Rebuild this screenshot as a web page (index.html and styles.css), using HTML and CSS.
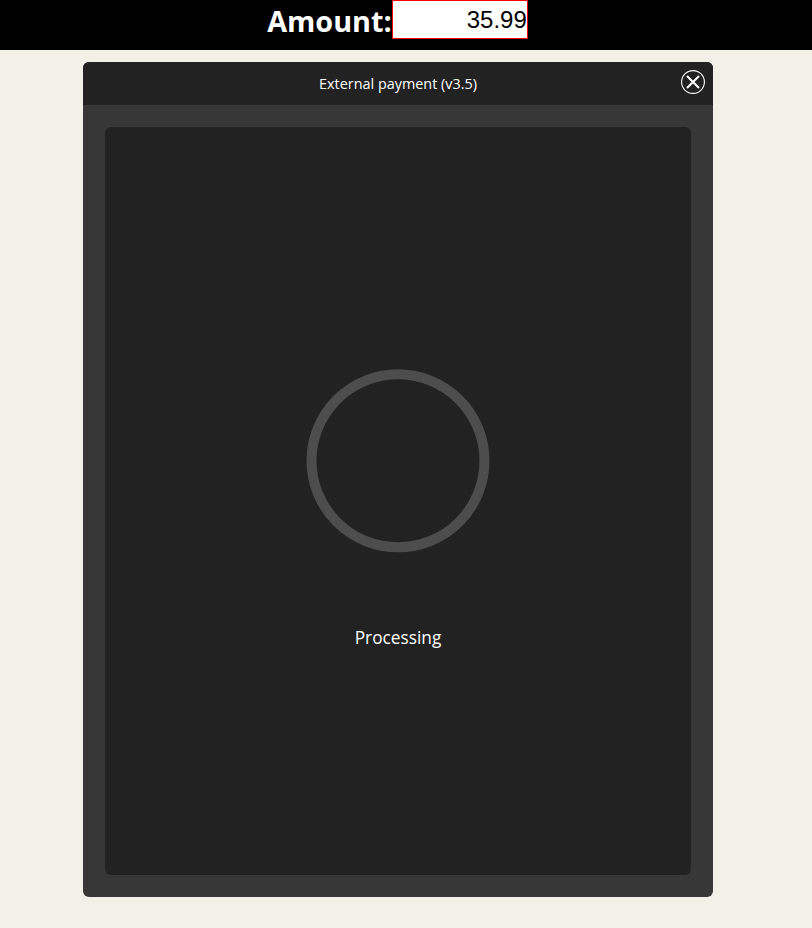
FILE: index.html
```html
<!DOCTYPE html>
<html lang="en">
<head>
  <meta charset="UTF-8">
  <title>External payment</title>
  <link rel="stylesheet" href="styles.css">
</head>
<body>

  <!-- Amount bar -->
  <div class="amount-bar">
    <label class="amount-label" for="amount">Amount:</label>
    <input id="amount" class="amount-input" type="text" value="35.99">
  </div>

  <!-- Payment dialog -->
  <div class="dialog">
    <div class="dialog-header">
      <span class="dialog-title">External payment (v3.5)</span>
      <button class="close-button" aria-label="Close">
        <svg width="24" height="24" viewBox="0 0 24 24">
          <circle cx="12" cy="12" r="11.4" fill="none" stroke="#fff" stroke-width="1.1"/>
          <path d="M6 6L18 18M18 6L6 18" fill="none" stroke="#fff" stroke-width="2"/>
        </svg>
      </button>
    </div>
    <div class="dialog-body">
      <div class="panel">
        <svg class="spinner" width="184" height="184" viewBox="0 0 184 184">
          <circle cx="92" cy="91.8" r="86.5" fill="none" stroke="#4d4d4d" stroke-width="10"/>
        </svg>
        <div class="status">Processing</div>
      </div>
    </div>
  </div>

</body>
</html>
```

FILE: styles.css
```css
/* General styles */
body {
  background-color: #f3f0e7;
  font-family: 'Open Sans', sans-serif;
  margin: 0;
}

/* Amount bar */
.amount-bar {
  display: flex;
  justify-content: center;
  align-items: flex-start;
  height: 50px;
  padding-right: 17px;
  background-color: #000000;
}

.amount-label {
  color: #ffffff;
  font-size: 28.8px;
  font-weight: 700;
  line-height: 41px;
}

.amount-input {
  box-sizing: border-box;
  width: 136px;
  height: 39px;
  margin: 0;
  padding: 0;
  border: 1px solid #ff0000;
  border-radius: 0;
  outline: none;
  background-color: #ffffff;
  color: #000000;
  font-family: 'Liberation Sans', sans-serif;
  font-size: 24px;
  text-align: right;
}

/* Dialog */
.dialog {
  width: 630px;
  margin: 12px 0 0 83px;
  border-radius: 6px;
  background-color: #373737;
}

.dialog-header {
  position: relative;
  display: flex;
  justify-content: center;
  align-items: center;
  height: 43px;
  border-radius: 6px 6px 0 0;
  background-color: #222222;
}

.dialog-title {
  color: #ffffff;
  font-size: 14.4px;
}

.close-button {
  position: absolute;
  top: 8px;
  right: 8px;
  width: 24px;
  height: 24px;
  padding: 0;
  border: none;
  background: none;
  cursor: pointer;
}

.close-button svg {
  display: block;
}

.dialog-body {
  padding: 22px;
}

.panel {
  display: flex;
  flex-direction: column;
  align-items: center;
  height: 748px;
  border-radius: 6px;
  background-color: #222222;
}

.spinner {
  display: block;
  margin-top: 242px;
}

.status {
  margin-top: 73px;
  color: #ffffff;
  font-size: 17.28px;
  line-height: 24px;
}
```
